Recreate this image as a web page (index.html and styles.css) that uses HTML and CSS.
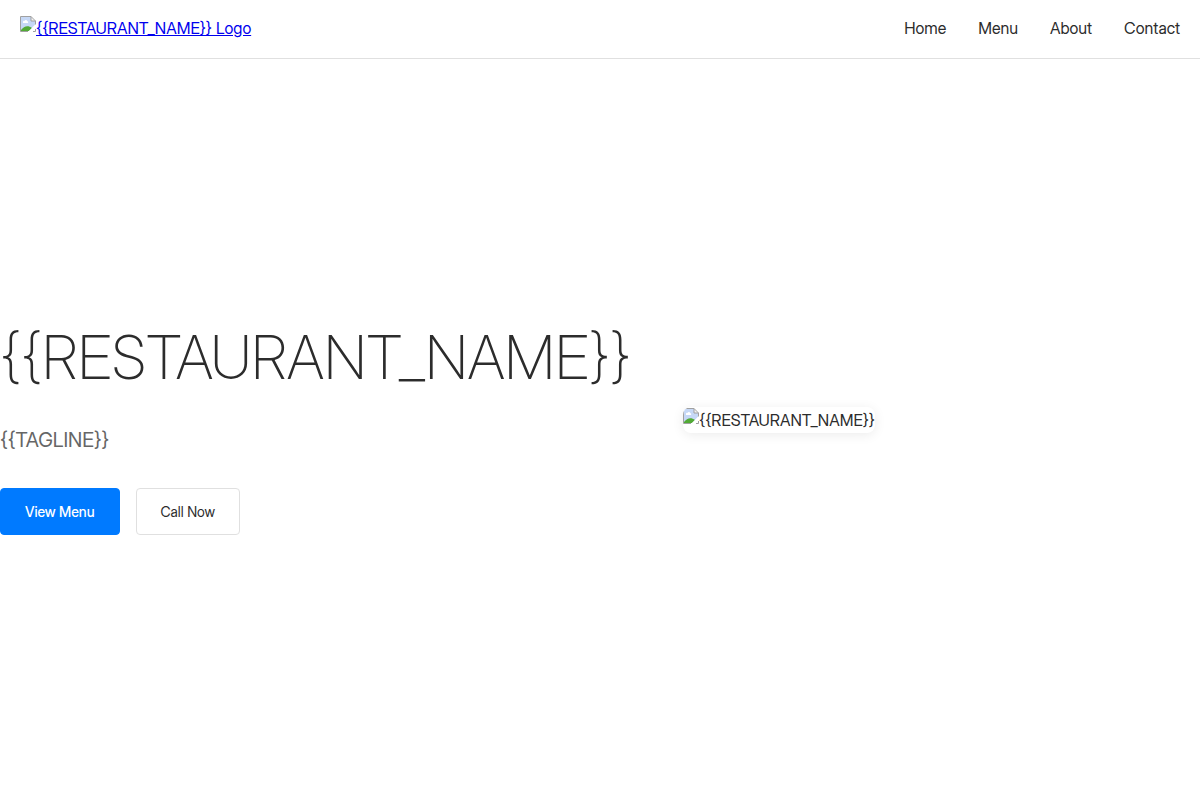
FILE: index.html
```html
<!DOCTYPE html>
<html lang="en">
<head>
  <meta charset="utf-8">
  <meta name="viewport" content="width=device-width, initial-scale=1">
  <title>{{RESTAURANT_NAME}}</title>
  <link rel="stylesheet" href="styles.css">
</head>
<body>
  <svg class="sprite" aria-hidden="true">
    <symbol id="image-placeholder" viewBox="0 0 16 16">
      <path d="M1 1h10v4h4v4L9 15H1z" fill="#c6d8f6"/>
      <path d="M3 6c0-1 1-1.500 1.500-1C5 3.500 7 4 7 5c1 0 1.500 1 1 2H3z" fill="#fff"/>
      <path d="M1 15v-1c3-4 7-5 11-2l-3 3z" fill="#52aa36"/>
      <path d="M11 1l4 4h-4z" fill="#f4f4f4"/>
      <path d="M.5 15.500V.500H11L15.500 5v4M11 .500V5h4.500M.5 15.500H8M13 15.500h2.500V13" fill="none" stroke="#a0a0a0"/>
      <path d="M8 16l8-8v3L11 16z" fill="#fff"/>
    </symbol>
  </svg>
  <header class="header">
    <a class="logo" href="#home"><svg class="placeholder-icon" aria-hidden="true"><use href="#image-placeholder"/></svg>{{RESTAURANT_NAME}} Logo</a>
    <nav class="nav">
      <a class="nav-link" href="#home">Home</a>
      <a class="nav-link" href="#menu">Menu</a>
      <a class="nav-link" href="#about">About</a>
      <a class="nav-link" href="#contact">Contact</a>
    </nav>
  </header>
  <main class="hero" id="home">
    <div class="hero-content">
      <h1 class="hero-title">{{RESTAURANT_NAME}}</h1>
      <p class="hero-tagline">{{TAGLINE}}</p>
      <div class="hero-actions">
        <button class="button button-primary" type="button">View Menu</button>
        <button class="button button-secondary" type="button">Call Now</button>
      </div>
    </div>
    <div class="hero-image"><svg class="placeholder-icon" aria-hidden="true"><use href="#image-placeholder"/></svg>{{RESTAURANT_NAME}}</div>
  </main>
</body>
</html>
```
FILE: styles.css
```css
* {
  box-sizing: border-box;
  margin: 0;
  padding: 0;
}

body {
  background: #fff;
  color: #2c2c2c;
  font-family: "Inter Display", Inter, sans-serif;
  font-size: 16px;
  line-height: 24px;
}

.sprite {
  display: none;
}

.header {
  display: flex;
  align-items: center;
  justify-content: space-between;
  padding: 16px 20px 18px;
  border-bottom: 1px solid #e0e0e0;
}

.logo {
  color: #0000ee;
}

.placeholder-icon {
  width: 16px;
  height: 16px;
  vertical-align: 2px;
}

.nav {
  display: flex;
  gap: 32px;
}

.nav-link {
  color: #2c2c2c;
  text-decoration: none;
}

.hero {
  display: grid;
  grid-template-columns: 1fr 1fr;
  gap: 52px;
  align-items: center;
  min-height: calc(100vh - 78px);
}

.hero-title {
  margin-bottom: 16px;
  font-size: 60px;
  font-weight: 200;
  line-height: 102px;
}

.hero-tagline {
  margin-bottom: 32px;
  color: #666;
  font-size: 20px;
  font-weight: 400;
  line-height: 32px;
}

.hero-actions {
  display: flex;
  gap: 16px;
}

.button {
  padding: 12px 24px;
  border: 1px solid #e0e0e0;
  border-radius: 4px;
  background: #fff;
  color: #2c2c2c;
  font: 400 14px/21px "Inter Display", Inter, sans-serif;
}

.button-primary {
  border-color: #007aff;
  background: #007aff;
  color: #fff;
  font-weight: 500;
}

.hero-image {
  width: fit-content;
  border-radius: 8px;
  box-shadow: 0 2px 12px rgba(0, 0, 0, 0.08);
  line-height: 26px;
  overflow: hidden;
}
```
